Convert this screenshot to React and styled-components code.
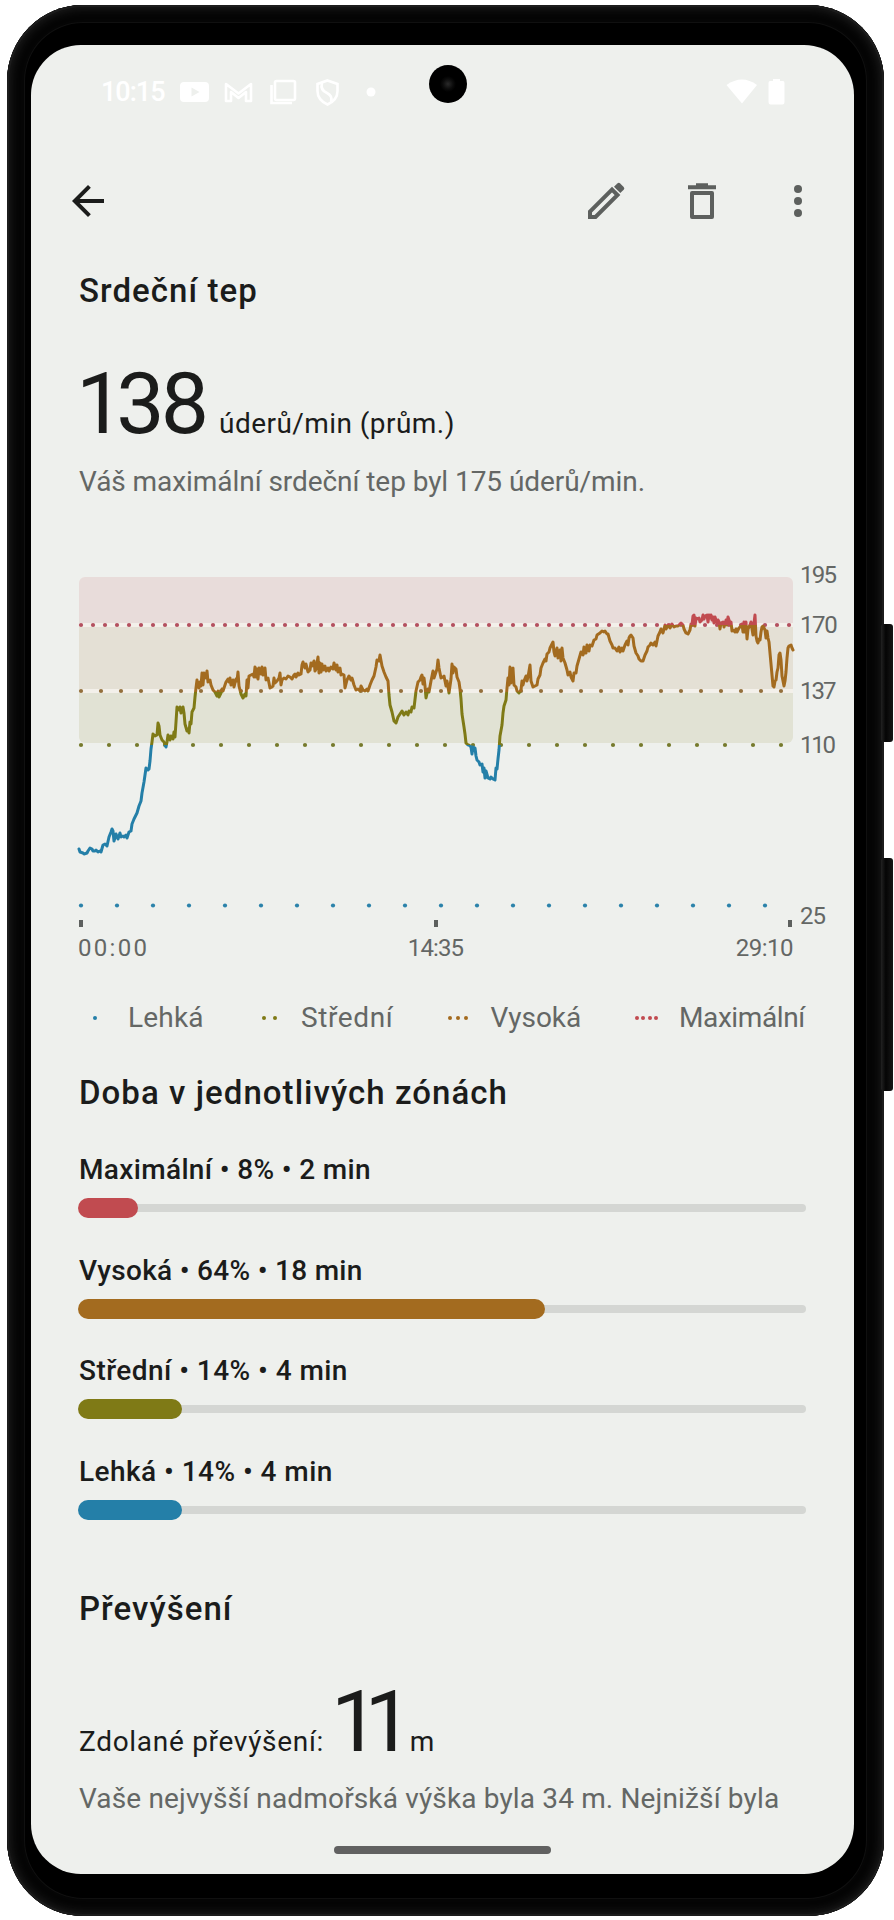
import styled, { createGlobalStyle } from "styled-components";

const GlobalStyle = createGlobalStyle`
    * { box-sizing: border-box; }
    body {
        margin: 0;
        background-color: #FFFFFF;
        font-family: Roboto, "Liberation Sans", sans-serif;
    }
`

const Stage = styled.div`
    position: relative;
    width: 894px;
    height: 1920px;
    padding: 5px 10px 4px 7px;
    overflow: hidden;
`

const Phone = styled.div`
    height: 1911px;
    padding: 40px 30px 42px 24px;
    border-radius: 76px;
    background-color: #000000;
    box-shadow: inset 0 0 0 2px #1C1C1C, inset 0 0 8px 4px #1B1B1B, inset 0 0 0 17px #050505, inset 0 0 0 18px #101010;
`

const SideButton = styled.div`
    position: absolute;
    left: 881px;
    top: ${props => props.$top}px;
    width: 12px;
    height: ${props => props.$height}px;
    border-radius: 3px;
    background: linear-gradient(90deg, #222222, #050505 40%, #161616);
`

const Screen = styled.main`
    position: relative;
    display: flex;
    flex-direction: column;
    height: 1829px;
    border-radius: 50px;
    overflow: hidden;
    background-color: #EEF0ED;
    color: #1B1C1B;
`

const Camera = styled.div`
    position: absolute;
    left: 398px;
    top: 20px;
    width: 38px;
    height: 38px;
    border-radius: 50%;
    background: radial-gradient(circle, #2A2A2A 0, #0C0C0C 5px, #000000 8px);
`

const StatusBar = styled.div`
    display: flex;
    align-items: center;
    height: 92px;
    padding: 2px 68px 0 70px;
    color: #FFFFFF;
`

const Clock = styled.div`
    width: 78px;
    font-size: 27px;
    font-weight: 500;
    letter-spacing: -1px;
`

const StatusIcons = styled.svg`
    display: block;
`

const Spacer = styled.div`
    flex: 1;
`

const AppBar = styled.header`
    display: flex;
    align-items: center;
    height: 128px;
    padding: 0 32px 0 33px;
    color: #5D605E;
`

const IconButton = styled.button`
    display: flex;
    padding: 0;
    border: 0;
    background: none;
    color: ${props => props.$dark ? "#1B1C1B" : "inherit"};
    margin-left: ${props => props.$gap || 0}px;
`

const Content = styled.div`
    display: flex;
    flex-direction: column;
    padding-left: 48px;
`

const Heading = styled.h2`
    margin: ${props => props.$space}px 0 0;
    font-size: 33px;
    line-height: 44px;
    font-weight: 500;
    letter-spacing: 1.05px;
    white-space: nowrap;
`

const Measure = styled.div`
    display: flex;
    align-items: baseline;
    margin-top: 40px;
    height: 101px;
    line-height: 101px;
    font-size: 28px;
    white-space: nowrap;
`

const Big = styled.span`
    font-size: 86px;
    letter-spacing: -4px;
    margin: 0 ${props => props.$right}px 0 ${props => props.$left}px;
`

// the digit one sits closer to its neighbour
const One = styled.span`
    letter-spacing: ${props => props.$track}px;
`

const Unit = styled.span`
    letter-spacing: ${props => props.$track}px;
`

const Note = styled.p`
    margin: 7.5px 0 0;
    font-size: 28px;
    line-height: 40px;
    letter-spacing: ${props => props.$track}px;
    color: #646765;
    white-space: nowrap;
`

const Chart = styled.svg`
    display: block;
    margin-top: 58px;
    margin-left: -9px;
    flex: none;
`

const AxisText = styled.text`
    font-size: 24px;
    fill: #646765;
    letter-spacing: ${props => props.$track}px;
`

const Legend = styled.div`
    display: flex;
    height: 40px;
    margin-top: 28px;
    font-size: 28px;
    line-height: 40px;
    color: #646765;
`

const LegendItem = styled.div`
    display: flex;
    align-items: center;
    width: ${props => props.$width}px;
    letter-spacing: ${props => props.$track}px;
`

const Dots = styled.div`
    display: flex;
    justify-content: center;
    gap: ${props => props.$gap}px;
    width: 32px;
    margin-right: ${props => props.$right}px;
`

const Dot = styled.i`
    width: 4px;
    height: 4px;
    flex: none;
    border-radius: 50%;
    background-color: ${props => props.$color};
`

const ZoneList = styled.div`
    margin-top: 35px;
`

const Zone = styled.div`
    height: 100.6px;
`

const ZoneLabel = styled.div`
    height: 48px;
    font-size: 28px;
    line-height: 40px;
    font-weight: 500;
    letter-spacing: ${props => props.$track}px;
    white-space: nowrap;
`

const Track = styled.div`
    display: flex;
    align-items: center;
    width: 728px;
    height: 20px;
    margin-left: -1px;
    border-radius: 10px;
    background: linear-gradient(#D4D6D3, #D4D6D3) center / 716px 8px no-repeat;
    position: relative;

    &::after {
        content: "";
        position: absolute;
        right: 0;
        width: 20px;
        height: 8px;
        border-radius: 4px;
        background-color: #D4D6D3;
    }
`

const Fill = styled.div`
    height: 20px;
    border-radius: 10px;
    background-color: ${props => props.$color};
`

const GestureBar = styled.div`
    position: absolute;
    left: 303px;
    top: 1801px;
    width: 217px;
    height: 8px;
    border-radius: 4px;
    background-color: #616161;
`

const colors = {
    max: "#C14B50",
    high: "#A36B1F",
    medium: "#7F7A16",
    light: "#247FA8",
}

const zones = [
    { name: "Maximální • 8% • 2 min", color: colors.max, width: 60, track: 0.35 },
    { name: "Vysoká • 64% • 18 min", color: colors.high, width: 467, track: 0.3 },
    { name: "Střední • 14% • 4 min", color: colors.medium, width: 104, track: 0.45 },
    { name: "Lehká • 14% • 4 min", color: colors.light, width: 104, track: 0.45 },
]

const legend = [
    { name: "Lehká", color: colors.light, dots: 1, gap: 0, width: 174.5, right: 17, track: 0.2 },
    { name: "Střední", color: colors.medium, dots: 2, gap: 7, width: 188.5, right: 15.5, track: 0.6 },
    { name: "Vysoká", color: colors.high, dots: 3, gap: 4, width: 188.5, right: 16.5, track: 0 },
    { name: "Maximální", color: colors.max, dots: 4, gap: 2.4, width: 180, right: 16.5, track: -0.4 },
]

const gridLines = [
    { y: 65, step: 12, count: 60, color: "#B4505F" },
    { y: 131, step: 20, count: 36, color: "#94703C" },
    { y: 185, step: 28, count: 26, color: "#767A2C" },
    { y: 345.5, step: 36, count: 20, color: "#2B82AA" },
]

// heart rate samples, x/y in chart pixels
const samples = [
    "9,229 10,232 13,233 14,234 17,233 18,231 20,228 22,229 23,231 25,231 26,230 28,232 30,231 31,232 33,225 35,224 37,226",
    "39,217 41,212 42,209 43,211 44,221 46,214 48,219 50,213 51,217 53,216 54,217 56,215 57,218 59,212 61,211 62,204 64,199 66,195 67,193",
    "69,186 71,181 72,173 74,162 76,148 78,150 79,149 80,141 81,129 82,122 83,114 85,116 87,115 88,103 89,106 90,115 92,120 94,122 96,127 97,122 98,115 100,120 101,116 103,119 104,112",
    "105,117 106,102 107,87 109,90 110,87 111,93 113,87 114,93 115,104 117,111 118,109 119,113 120,102 121,104 122,92 124,88 125,77 126,68 127,60 128,65 129,68 130,62 131,66",
    "132,53 133,65 134,53 136,58 137,51 138,62 140,60 141,65 143,70 145,72 147,76 148,71 149,77 151,73 152,69 153,71 154,68 156,62 158,59 159,62 160,58 161,65 163,60 164,67 166,59 167,61 168,52",
    "169,66 171,74 173,78 175,74 176,76 177,60 178,68 179,56 181,55 183,54 184,57 185,47 186,57 187,49 188,59 189,48 191,54 192,47 193,55 195,48 196,60 198,58 200,68 202,67 203,66 204,58 205,63 207,61",
    "209,58 210,53 211,65 212,60 214,58 216,59 218,56 220,57 222,59 224,55 225,54 226,57 228,53 229,55 231,54 232,45 233,42 235,48 236,44 238,52 240,50 241,43 242,46 244,41 245,51 246,49 248,37 249,53 250,43",
    "251,52 252,44 253,50 255,46 256,51 258,48 259,51 261,47 263,49 264,43 266,50 267,45 268,52 270,48 271,55 272,54 274,55 275,68 277,60 279,56 281,60 282,58",
    "284,65 286,70 288,69 290,71 291,66 293,70 295,71 297,69 298,71 300,65 302,60 304,56 306,47 307,40 309,41 310,35 312,46 314,52 316,57 318,61 319,75 320,85 322,92 324,101 326,103 328,97 330,94",
    "332,91 334,95 336,92 338,95 339,91 341,92 342,87 344,88 346,71 348,62 350,60 351,57 352,55 353,64 354,58 355,66 356,78 358,69 359,72 361,61 363,51 364,58 366,52 367,49 368,40 369,48 371,58 373,57",
    "374,56 376,66 377,61 379,73 381,59 382,44 383,53 384,47 386,49 387,57 389,62 390,69 391,79 392,94 394,107 395,114 396,123 398,125 399,125 401,127 402,134 403,127 405,128 406,136 407,140 409,142 410,145 412,144 413,152 414,148",
    "415,158 416,151 418,158 420,159 421,157 423,159 425,160 426,148 427,149 428,139 429,130 430,116 432,105 433,93 434,86 436,80 437,68 438,58 439,65 440,47 441,63 442,49 443,48 444,65 446,67 447,71 449,73 451,70 452,61 453,65",
    "454,61 456,56 457,61 458,57 460,45 461,61 463,67 465,66 467,65 468,59 470,55 471,48 473,43 475,39 476,41 477,34 479,32 480,28 482,24 483,22 484,32 485,36 487,28 488,38 490,30 491,41 492,28 493,38 495,43 497,50 498,55",
    "500,52 501,57 503,61 504,53 506,53 507,46 509,39 511,32 513,35 514,27 515,33 516,33 517,25 519,31 520,25 522,26 524,20 526,19 527,15 530,13 532,11 534,12 535,11 537,14 538,14 540,21 542,25 543,28 545,28 547,31 549,27 550,32 552,28 553,31",
    "555,25 557,21 558,25 559,18 560,16 561,15 563,18 564,26 566,33 568,36 569,39 571,41 573,41 575,35 577,31 578,27 580,25 581,23 583,25 585,22 586,26 588,16 590,12 591,9 593,13 595,5 596,9 598,5",
    "600,8 602,4 604,7 606,6 608,6 610,4 611,3 613,5 614,9 616,13 618,14 620,10 621,4 622,5 623,-4 624,-5 625,6 626,-2 627,-1 629,-2 630,2 632,0 633,-5 634,-1 635,-4 637,-5 638,2 639,-5 640,-2 641,-5 642,0 643,-3 644,3 645,-3 647,3 648,0",
    "649,2 650,9 651,3 653,2 654,7 655,4 656,0 657,5 658,-3 659,0 660,4 661,2 662,11 663,10 665,12 666,9 667,12 669,8 671,6 672,4 673,12 674,2 675,12 676,2 677,19 678,9 680,5 681,2 682,9 683,15 684,3 685,-5",
    "686,16 687,21 688,23 689,19 690,20 691,12 692,7 693,6 694,8 695,10 696,18 697,11 698,18 699,22 700,33 701,44 702,55 703,66 704,67 705,61 706,60 707,52 708,48 709,35 710,33 711,40 712,56 714,66 715,61 716,52 717,38 718,28 719,26 721,25 722,28 723,30",
]

// shifts the samples into the plot area below the top axis label
const linePoints = samples.join(" ").split(" ").map(pair => {
    const [x, y] = pair.split(",").map(Number);
    return `${x},${y + 60}`;
}).join(" ")

const yLabels = [
    { text: "195", y: 23, track: -1.8 },
    { text: "170", y: 73, track: -1.4 },
    { text: "137", y: 139, track: -2 },
    { text: "110", y: 193, track: -2.2 },
    { text: "25", y: 364, track: -1 },
]

const HeartRateChart = () => (
    <Chart width="784" height="410" viewBox="0 0 784 410">
        <defs>
            <linearGradient id="zone" gradientUnits="userSpaceOnUse" x1="0" y1="0" x2="0" y2="400">
                <stop offset="0.1625" stopColor={colors.max}/>
                <stop offset="0.1625" stopColor={colors.high}/>
                <stop offset="0.33" stopColor={colors.high}/>
                <stop offset="0.33" stopColor={colors.medium}/>
                <stop offset="0.4625" stopColor={colors.medium}/>
                <stop offset="0.4625" stopColor={colors.light}/>
            </linearGradient>
            <clipPath id="plot"><rect x="9" y="17" width="714" height="166" rx="6"/></clipPath>
        </defs>
        <g clipPath="url(#plot)">
            <rect x="9" y="17" width="714" height="166" fill="#F3F0EA"/>
            <rect x="9" y="17" width="714" height="46" fill="#E8DCDA"/>
            <rect x="9" y="67" width="714" height="62" fill="#E4E0D5"/>
            <rect x="9" y="133" width="714" height="50" fill="#E1E2D4"/>
        </g>
        {gridLines.map(line => Array.from({ length: line.count }, (_, i) => (
            <circle key={`${line.y}-${i}`} cx={11 + i * line.step} cy={line.y} r="2.1" fill={line.color}/>
        )))}
        <polyline points={linePoints} fill="none" stroke="url(#zone)" strokeWidth="3" strokeLinejoin="round" strokeLinecap="round"/>
        {[9, 364, 718].map(x => <rect key={x} x={x} y="360" width="4" height="7" fill="#5D605E"/>)}
        {yLabels.map(label => (
            <AxisText key={label.text} x="730" y={label.y} $track={label.track}>{label.text}</AxisText>
        ))}
        <AxisText x="8" y="396" $track={2.3}>00:00</AxisText>
        <AxisText x="365.500" y="396" textAnchor="middle" $track={-0.9}>14:35</AxisText>
        <AxisText x="723" y="396" textAnchor="end" $track={-0.5}>29:10</AxisText>
    </Chart>
)

const Notifications = () => (
    <StatusIcons width="200" height="30" viewBox="0 0 200 30" fill="none" stroke="#FFFFFF" strokeWidth="2.6">
        <path fill="#FFFFFF" fillRule="evenodd" stroke="none" d="M5 5H26Q30 5 30 9V21Q30 25 26 25H5Q1 25 1 21V9Q1 5 5 5ZM12.500 10.500V19.500L20.500 15Z"/>
        <path strokeLinejoin="round" d="M47 24V7L59.500 16.500L72 7V24H67V15L59.500 21L52 15V24Z"/>
        <rect x="96" y="4" width="20" height="19" rx="1.500"/>
        <path d="M92.500 8V26H113"/>
        <path d="M148.500 3.500L158.500 7V14Q158.500 23 148.500 27.500Q138.500 23 138.500 14V7Z"/>
        <path d="M143 6Q141 13 148 16Q154 19 152 25"/>
        <circle cx="192" cy="15" r="4.500" fill="#FFFFFF" stroke="none"/>
    </StatusIcons>
)

const Connectivity = () => (
    <StatusIcons width="60" height="28" viewBox="0 0 60 28" fill="#FFFFFF">
        <path d="M0.500 7Q16 -4 31 7L16 25.500Z"/>
        <path d="M44 3H47V1H54V3H57Q58.500 3 58.500 5V24Q58.500 26.500 56.500 26.500H44.500Q42.500 26.500 42.500 24V5Q42.500 3 44 3Z"/>
    </StatusIcons>
)

export default function App() {
    return <Stage>
        <GlobalStyle/>
        <SideButton $top={624} $height={118}/>
        <SideButton $top={858} $height={233}/>
        <Phone>
            <Screen>
                <StatusBar>
                    <Clock>10:15</Clock>
                    <Notifications/>
                    <Spacer/>
                    <Connectivity/>
                </StatusBar>
                <AppBar>
                    <IconButton $dark aria-label="Zpět">
                        <svg width="48" height="48" viewBox="0 0 24 24" fill="currentColor">
                            <path d="M20 11H7.830l5.590-5.590L12 4l-8 8 8 8 1.410-1.410L7.830 13H20v-2z"/>
                        </svg>
                    </IconButton>
                    <Spacer/>
                    <IconButton aria-label="Upravit">
                        <svg width="48" height="48" viewBox="0 0 48 48" fill="none" stroke="currentColor" strokeWidth="4">
                            <path d="M8 34.500V40H13.500L35.500 18L30 12.500Z"/>
                            <path fill="currentColor" stroke="none" d="M32 9.800L35.300 6.500Q36.800 5.200 38.200 6.500L41.700 10Q43 11.400 41.700 12.800L38.300 16.100Z"/>
                        </svg>
                    </IconButton>
                    <IconButton $gap={48} aria-label="Smazat">
                        <svg width="48" height="48" viewBox="0 0 48 48" fill="none" stroke="currentColor" strokeWidth="4">
                            <path strokeLinejoin="round" d="M14 16V40H34V16Z"/>
                            <path d="M10 10.300H38M18 8.200H30"/>
                        </svg>
                    </IconButton>
                    <IconButton $gap={48} aria-label="Další">
                        <svg width="48" height="48" viewBox="0 0 24 24" fill="currentColor">
                            <circle cx="12" cy="6" r="2"/>
                            <circle cx="12" cy="12" r="2"/>
                            <circle cx="12" cy="18" r="2"/>
                        </svg>
                    </IconButton>
                </AppBar>
                <Content>
                    <Heading $space={4}>Srdeční tep</Heading>
                    <Measure>
                        <Big $left={-3} $right={14}><One $track={-8}>1</One>38</Big>
                        <Unit $track={0.45}>úderů/min (prům.)</Unit>
                    </Measure>
                    <Note $track={-0.06}>Váš maximální srdeční tep byl 175 úderů/min.</Note>
                    <HeartRateChart/>
                    <Legend>
                        {legend.map(item => (
                            <LegendItem key={item.name} $width={item.width} $track={item.track}>
                                <Dots $gap={item.gap} $right={item.right}>
                                    {Array.from({ length: item.dots }, (_, i) => <Dot key={i} $color={item.color}/>)}
                                </Dots>
                                {item.name}
                            </LegendItem>
                        ))}
                    </Legend>
                    <Heading $space={33.5}>Doba v jednotlivých zónách</Heading>
                    <ZoneList>
                        {zones.map(zone => (
                            <Zone key={zone.name}>
                                <ZoneLabel $track={zone.track}>{zone.name}</ZoneLabel>
                                <Track><Fill $color={zone.color} style={{ width: zone.width }}/></Track>
                            </Zone>
                        ))}
                    </ZoneList>
                    <Heading $space={34.5}>Převýšení</Heading>
                    <Measure>
                        <Unit $track={0.7}>Zdolané převýšení:</Unit>
                        <Big $left={7} $right={12}><One $track={-15}>11</One></Big>
                        <Unit $track={0}>m</Unit>
                    </Measure>
                    <Note $track={0.15}>Vaše nejvyšší nadmořská výška byla 34 m. Nejnižší byla</Note>
                </Content>
                <Camera/>
                <GestureBar/>
            </Screen>
        </Phone>
    </Stage>
}
